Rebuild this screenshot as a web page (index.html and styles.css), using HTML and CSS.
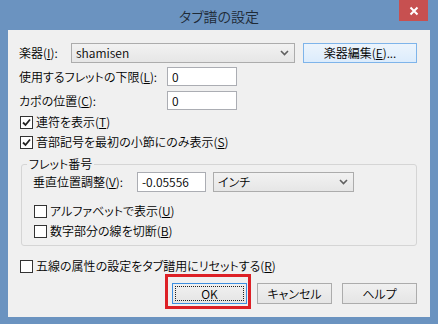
FILE: index.html
```html
<!DOCTYPE html>
<html lang="ja">
<head>
<meta charset="utf-8">
<title>タブ譜の設定</title>
<link rel="stylesheet" href="styles.css">
</head>
<body>
<div class="window">
  <div class="titlebar">
    <span class="tb-side"></span>
    <span class="title">タブ譜の設定</span>
    <span class="tb-side tb-right">
      <span class="close">
        <svg width="10" height="10" viewBox="0 0 10 10"><path d="M1.5 1.5 L8.5 8.5 M8.5 1.5 L1.5 8.5" stroke="#fff" stroke-width="2" fill="none"/></svg>
      </span>
    </span>
  </div>
  <div class="client">
    <div class="row r1">
      <span class="lbl w-inst">楽器(<u>I</u>):</span>
      <div class="combo w-combo1"><span class="ctext">shamisen</span><svg class="arrow" width="9" height="6" viewBox="0 0 9 6"><path d="M1 1 L4.5 4.5 L8 1" stroke="#606060" stroke-width="1.6" fill="none"/></svg></div>
      <button class="btn btn-hot w-edit">楽器編集(<u>E</u>)...</button>
    </div>
    <div class="row r2">
      <span class="lbl w-fret">使用するフレットの下限(<u>L</u>):</span>
      <div class="input w-small">0</div>
    </div>
    <div class="row r3">
      <span class="lbl w-fret">カポの位置(<u>C</u>):</span>
      <div class="input w-small">0</div>
    </div>
    <div class="check c1"><span class="box"><svg width="11" height="11" viewBox="0 0 11 11"><path d="M2 5.5 L4.5 8 L9 2.5" stroke="#222" stroke-width="1.8" fill="none"/></svg></span><span>連符を表示(<u>T</u>)</span></div>
    <div class="check"><span class="box"><svg width="11" height="11" viewBox="0 0 11 11"><path d="M2 5.5 L4.5 8 L9 2.5" stroke="#222" stroke-width="1.8" fill="none"/></svg></span><span>音部記号を最初の小節にのみ表示(<u>S</u>)</span></div>
    <fieldset class="group">
      <legend>フレット番号</legend>
      <div class="row vrow">
        <span class="lbl w-vert">垂直位置調整(<u>V</u>):</span>
        <div class="input w-vin">-0.05556</div>
        <div class="combo w-unit"><span class="ctext">インチ</span><svg class="arrow" width="9" height="6" viewBox="0 0 9 6"><path d="M1 1 L4.5 4.5 L8 1" stroke="#606060" stroke-width="1.6" fill="none"/></svg></div>
      </div>
      <div class="check c-u"><span class="box"></span><span>アルファベットで表示(<u>U</u>)</span></div>
      <div class="check"><span class="box"></span><span>数字部分の線を切断(<u>B</u>)</span></div>
    </fieldset>
    <div class="check c-r"><span class="box"></span><span>五線の属性の設定をタブ譜用にリセットする(<u>R</u>)</span></div>
    <div class="buttons">
      <button class="btn btn-default"><span class="focus">OK</span></button>
      <button class="btn">キャンセル</button>
      <button class="btn">ヘルプ</button>
    </div>
  </div>
</div>
</body>
</html>
```

FILE: styles.css
```css
html, body {
  margin: 0;
  padding: 0;
}
body {
  width: 438px;
  height: 324px;
  overflow: hidden;
  background: #6b93c0;
  font-family: "Noto Sans CJK JP", "Noto Sans", sans-serif;
  font-size: 12px;
  font-weight: 350;
  line-height: 16px;
  color: #000;
  font-feature-settings: "palt";
}
.window {
  display: flex;
  flex-direction: column;
  width: 438px;
  height: 324px;
}
.titlebar {
  height: 30px;
  display: grid;
  grid-template-columns: 1fr auto 1fr;
  align-items: start;
}
.title {
  font-size: 14px;
  line-height: 18px;
  margin-top: 7px;
  color: #1e2a36;
}
.tb-right {
  display: flex;
  justify-content: flex-end;
  padding-right: 10px;
}
.close {
  width: 29px;
  height: 21px;
  background: #c75050;
  display: flex;
  align-items: center;
  justify-content: center;
}
.client {
  margin: 0 8px;
  height: 287px;
  background: #f0f0f0;
  box-sizing: border-box;
  padding: 13px 13px 0 11px;
  display: flex;
  flex-direction: column;
}
.row {
  display: flex;
  align-items: center;
}
.lbl {
  flex: none;
  white-space: nowrap;
}
u {
  text-decoration: underline;
  text-underline-offset: 1px;
}
.w-inst { width: 52px; }
.w-fret { width: 148px; }
.w-vert { width: 104px; }
.r1 { height: 20px; }
.r2 { margin-top: 4px; height: 19px; }
.r3 { margin-top: 5px; height: 19px; }
.combo {
  box-sizing: border-box;
  height: 20px;
  border: 1px solid #acacac;
  background: linear-gradient(#f2f2f2, #e6e6e6);
  display: flex;
  align-items: center;
  justify-content: space-between;
  padding: 0 5px 0 4px;
  flex: none;
}
.w-combo1 { width: 224px; }
.w-unit { width: 141px; margin-left: 7px; }
.input {
  box-sizing: border-box;
  height: 100%;
  border: 1px solid #abadb3;
  background: #fff;
  padding-left: 4px;
  display: flex;
  align-items: center;
  flex: none;
}
.w-small { width: 70px; height: 19px; }
.w-vin { width: 69px; height: 20px; }
.btn {
  box-sizing: border-box;
  height: 21px;
  width: 75px;
  border: 1px solid #acacac;
  background: linear-gradient(#f0f0f0, #e5e5e5);
  font: inherit;
  color: #000;
  padding: 0;
  display: flex;
  align-items: center;
  justify-content: center;
  flex: none;
}
.btn-hot {
  width: 114px;
  height: 20px;
  margin-left: 8px;
  border-color: #7eb4ea;
  background: linear-gradient(#ecf4fc, #dcecfc);
}
.check {
  display: flex;
  align-items: center;
  height: 20px;
  gap: 3px;
  white-space: nowrap;
}
.check .box {
  box-sizing: border-box;
  width: 13px;
  height: 13px;
  border: 1px solid #333;
  background: #fff;
  display: flex;
  align-items: center;
  justify-content: center;
  flex: none;
  margin-left: 1px;
}
.c1 { margin-top: 2px; }
.group {
  margin: 4px 0 0 2px;
  padding: 0 0 4px 11px;
  width: 396px;
  box-sizing: border-box;
  border: 1px solid #d5d5d5;
  border-radius: 3px;
  min-inline-size: 0;
}
.group legend {
  padding: 0 2px;
  margin-left: -6px;
  line-height: 16px;
}
.vrow { height: 20px; }
.c-u { margin-top: 9px; }
.c-r { margin-top: 10px; }
.buttons {
  margin-top: 7px;
  display: flex;
  justify-content: flex-end;
  gap: 10px;
}
.btn-default {
  position: relative;
  border-color: #3c8ee0;
  padding: 2px;
}
.btn-default .focus {
  flex: 1;
  align-self: stretch;
  border: 1px dotted #222;
  display: flex;
  align-items: center;
  justify-content: center;
}
.btn-default::after {
  content: "";
  position: absolute;
  top: -10px;
  bottom: -6px;
  left: -8px;
  right: -5px;
  border: 3px solid #dd2026;
}
```
